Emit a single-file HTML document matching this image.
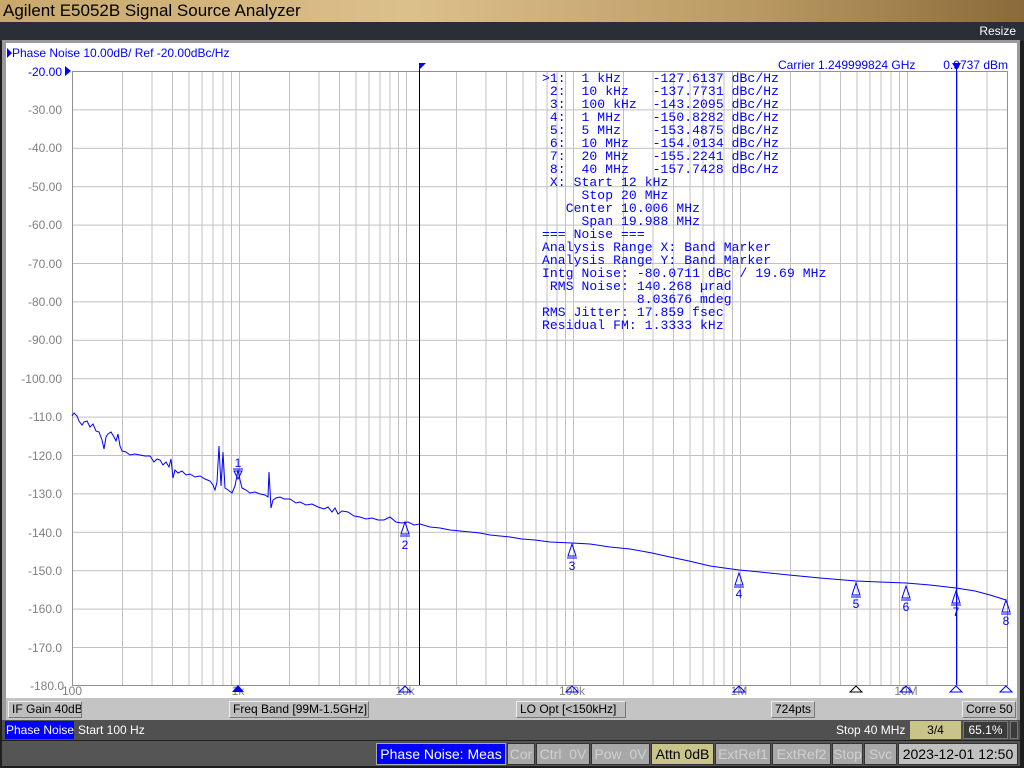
<!DOCTYPE html>
<html><head><meta charset="utf-8"><style>
*{margin:0;padding:0;box-sizing:border-box}
body{width:1024px;height:768px;background:#1e1e1e;position:relative;overflow:hidden;font-family:"Liberation Sans",sans-serif}
.abs{position:absolute}
#title{left:0;top:0;width:1024px;height:22px;background:linear-gradient(90deg,#c8a86a,#dcc08c 40%,#b89860 75%,#8a6a3a);color:#000;font-size:17px;line-height:22px;padding-left:3px;white-space:nowrap}
#rs{left:0;top:22px;width:1024px;height:19px;background:#2a2e37;color:#fff;font-size:12px;line-height:19px;text-align:right;padding-right:8px}
#frame{left:2px;top:40px;width:1018px;height:700px;background:#9a9a9a}
#panel{left:6px;top:43px;width:1011px;height:655px;background:#fff}
.btn{position:absolute;top:701px;height:17px;background:#bdbdbd;border:1px solid #777;border-top-color:#eee;border-left-color:#eee;font-size:12px;line-height:15px;padding-left:3px;color:#000;white-space:nowrap;overflow:hidden}
.st{position:absolute;font-size:12px;line-height:18px;color:#fff;white-space:nowrap;overflow:hidden}
.bb{position:absolute;top:743px;height:22px;font-size:14px;line-height:21px;text-align:center;border:1px solid #333;background:#a8a8a8;color:#d0d0d0;white-space:nowrap;overflow:hidden}
</style></head><body>
<div id="title" class="abs">Agilent E5052B Signal Source Analyzer</div>
<div id="rs" class="abs">Resize</div>
<div id="frame" class="abs"></div>
<div id="panel" class="abs"></div>
<svg class="abs" style="left:0;top:0" width="1024" height="700" font-family="Liberation Sans, sans-serif">
<defs>
<pattern id="vg" x="72" y="0" width="167" height="700" patternUnits="userSpaceOnUse">
<g stroke="#c0c0c0" stroke-width="1">
<line x1="0.5" y1="0" x2="0.5" y2="700"/><line x1="50.5" y1="0" x2="50.5" y2="700"/><line x1="80" y1="0" x2="80" y2="700"/><line x1="100.5" y1="0" x2="100.5" y2="700"/><line x1="117" y1="0" x2="117" y2="700"/><line x1="130" y1="0" x2="130" y2="700"/><line x1="141" y1="0" x2="141" y2="700"/><line x1="151" y1="0" x2="151" y2="700"/><line x1="159.5" y1="0" x2="159.5" y2="700"/>
</g></pattern>
<pattern id="hg" x="0" y="71" width="1024" height="38.4" patternUnits="userSpaceOnUse">
<line x1="0" y1="0.5" x2="1024" y2="0.5" stroke="#c0c0c0"/></pattern>
</defs>
<rect x="72" y="71" width="936" height="614" fill="url(#vg)"/>
<rect x="72" y="71" width="936" height="614" fill="url(#hg)"/>
<rect x="72.5" y="71.5" width="935" height="614" fill="none" stroke="#909090"/>
<text x="12" y="57" font-size="12" fill="#0000ff">Phase Noise 10.00dB/ Ref -20.00dBc/Hz</text>
<polygon points="7,48 12,53 7,58" fill="#0000ff"/>
<polygon points="65,66 71,71 65,76" fill="#0000ff"/>
<g font-size="12" fill="#808080" text-anchor="end">
<text x="62" y="76" fill="#0000ff">-20.00</text>
<text x="62" y="114">-30.00</text><text x="62" y="152">-40.00</text><text x="62" y="191">-50.00</text><text x="62" y="229">-60.00</text><text x="62" y="268">-70.00</text><text x="62" y="306">-80.00</text><text x="62" y="344">-90.00</text><text x="62" y="383">-100.00</text><text x="62" y="421">-110.0</text><text x="62" y="460">-120.0</text><text x="62" y="498">-130.0</text><text x="62" y="537">-140.0</text><text x="62" y="575">-150.0</text><text x="62" y="613">-160.0</text><text x="62" y="652">-170.0</text><text x="64" y="690">-180.0</text>
</g>
<g font-size="12" fill="#808080" text-anchor="middle">
<text x="72" y="695">100</text><text x="238" y="695">1k</text><text x="405" y="695">10k</text><text x="572" y="695">100k</text><text x="739" y="695">1M</text><text x="906" y="695">10M</text>
</g>
<text x="778" y="69" font-size="12" fill="#0000ff">Carrier 1.249999824 GHz</text>
<text x="1008" y="69" font-size="12" fill="#0000ff" text-anchor="end">0.9737 dBm</text>
<line x1="419.5" y1="66" x2="419.5" y2="685" stroke="#000"/>
<polygon points="419,63 426,63 419,70" fill="#0000ff"/>
<line x1="956.5" y1="66" x2="956.5" y2="685" stroke="#0000ff"/>
<polygon points="952,63 961,63 956.5,70" fill="#0000ff"/>
<polyline fill="none" stroke="#0000ff" stroke-width="1" points="72,416 74,413 77,416 79,421 82,425 84,422 87,421 90,427 93,424 96,431 99,432 102,440 104,449 106,437 108,434 111,432 114,437 116,441 118,434 120,446 122,451 126,452 130,455 135,454 140,455 145,456 150,456 154,462 157,459 160,460 163,465 166,462 169,467 171,459 173,478 175,470 178,473 182,471 186,475 190,474 195,477 200,476 205,479 210,481 213,485 215,490 217,482 219,446 221,486 223,452 225,488 228,490 232,493 235,486 238,470 240,480 242,488 246,490 250,493 255,492 260,494 265,495 268,497 269,472 271,508 273,500 276,498 280,497 284,499 290,499 296,503 300,502 306,505 312,504 318,507 324,509 328,507 332,512 335,508 338,514 342,511 348,512 354,516 360,517 366,519 372,518 378,520 384,520 390,517 396,522 402,523 408,522 414,525 420,524 430,527 440,528 450,530 460,531 470,532 480,533 490,535 500,536 510,537 522,539 535,540 550,542 572,543 590,544 610,547 630,549 652,553 670,557 689,561 710,566 739,570 760,572 789,575 820,578 856,581 880,582 906,583 930,585 956,588 975,591 990,595 1006,600"/>
<g fill="none" stroke="#0000ff">
<path d="M233,469 H243 M234,471 L238,479 L242,471 Z"/>
<path d="M405,522 L401,534 H409 Z M400,536 H410"/>
<path d="M572,544 L568,556 H576 Z M567,558 H577"/>
<path d="M739,573 L735,585 H743 Z M734,587 H744"/>
<path d="M856,583 L852,595 H860 Z M851,597 H861"/>
<path d="M906,586 L902,598 H910 Z M901,600 H911"/>
<path d="M956,591 L952,603 H960 Z M951,605 H961"/>
<path d="M1006,600 L1002,612 H1010 Z M1001,614 H1011"/>
</g>
<g font-size="12" fill="#0000ff" text-anchor="middle">
<text x="238" y="467">1</text><text x="405" y="549">2</text><text x="572" y="570">3</text><text x="739" y="598">4</text><text x="856" y="608">5</text><text x="906" y="611">6</text><text x="956" y="616">7</text><text x="1006" y="625">8</text>
</g>
<polygon points="238,685 232,692 244,692" fill="#0000ff"/>
<g fill="none" stroke="#0000ff">
<path d="M405,686 L399,692 H411 Z M572,686 L566,692 H578 Z M739,686 L733,692 H745 Z M906,686 L900,692 H912 Z M956,686 L950,692 H962 Z M1006,686 L1000,692 H1012 Z"/>
</g>
<path d="M856,686 L850,692 H862 Z" fill="none" stroke="#000"/>
<text font-family="Liberation Mono, monospace" font-size="13" letter-spacing="0.1" fill="#0000ff" xml:space="preserve"><tspan x="542" y="82">&gt;1:  1 kHz    -127.6137 dBc/Hz</tspan><tspan x="542" y="95"> 2:  10 kHz   -137.7731 dBc/Hz</tspan><tspan x="542" y="108"> 3:  100 kHz  -143.2095 dBc/Hz</tspan><tspan x="542" y="121"> 4:  1 MHz    -150.8282 dBc/Hz</tspan><tspan x="542" y="134"> 5:  5 MHz    -153.4875 dBc/Hz</tspan><tspan x="542" y="147"> 6:  10 MHz   -154.0134 dBc/Hz</tspan><tspan x="542" y="160"> 7:  20 MHz   -155.2241 dBc/Hz</tspan><tspan x="542" y="173"> 8:  40 MHz   -157.7428 dBc/Hz</tspan><tspan x="542" y="186"> X: Start 12 kHz</tspan><tspan x="542" y="199">     Stop 20 MHz</tspan><tspan x="542" y="212">   Center 10.006 MHz</tspan><tspan x="542" y="225">     Span 19.988 MHz</tspan><tspan x="542" y="238">=== Noise ===</tspan><tspan x="542" y="251">Analysis Range X: Band Marker</tspan><tspan x="542" y="264">Analysis Range Y: Band Marker</tspan><tspan x="542" y="277">Intg Noise: -80.0711 dBc / 19.69 MHz</tspan><tspan x="542" y="290"> RMS Noise: 140.268 µrad</tspan><tspan x="542" y="303">            8.03676 mdeg</tspan><tspan x="542" y="316">RMS Jitter: 17.859 fsec</tspan><tspan x="542" y="329">Residual FM: 1.3333 kHz</tspan></text>
</svg>
<div class="abs" style="left:6px;top:698px;width:1011px;height:22px;background:#c4c4c4"></div>
<div class="btn" style="left:8px;width:74px">IF Gain 40dB</div>
<div class="btn" style="left:229px;width:140px">Freq Band [99M-1.5GHz]</div>
<div class="btn" style="left:516px;width:110px">LO Opt [&lt;150kHz]</div>
<div class="btn" style="left:771px;width:44px">724pts</div>
<div class="btn" style="left:962px;width:54px">Corre 50</div>
<div class="abs" style="left:2px;top:720px;width:1018px;height:20px;background:#505050"></div>
<div class="st" style="left:5px;top:721px;width:69px;background:#0000ff;padding-left:1px">Phase Noise</div>
<div class="st" style="left:78px;top:721px">Start 100 Hz</div>
<div class="st" style="left:836px;top:721px">Stop 40 MHz</div>
<div class="st" style="left:910px;top:721px;width:51px;background:#c8c48a;color:#000;text-align:center">3/4</div>
<div class="st" style="left:963px;top:721px;width:45px;background:#3a3a3a;border:1px solid #777;text-align:center;line-height:16px">65.1%</div>
<div class="st" style="left:1010px;top:721px;width:8px;height:18px;background:#3a3a3a;border:1px solid #777"></div>
<div class="abs" style="left:2px;top:741px;width:1018px;height:25px;background:#555"></div>
<div class="bb" style="left:376px;width:130px;background:#0000ff;color:#fff;border-color:#aaa">Phase Noise: Meas</div>
<div class="bb" style="left:507px;width:28px">Cor</div>
<div class="bb" style="left:536px;width:54px">Ctrl &nbsp;0V</div>
<div class="bb" style="left:591px;width:59px">Pow &nbsp;0V</div>
<div class="bb" style="left:651px;width:63px;background:#c8c48a;color:#000">Attn 0dB</div>
<div class="bb" style="left:715px;width:56px">ExtRef1</div>
<div class="bb" style="left:772px;width:59px">ExtRef2</div>
<div class="bb" style="left:832px;width:31px">Stop</div>
<div class="bb" style="left:864px;width:33px">Svc</div>
<div class="bb" style="left:898px;width:120px;background:#c0c0c0;color:#000">2023-12-01 12:50</div>
</body></html>
